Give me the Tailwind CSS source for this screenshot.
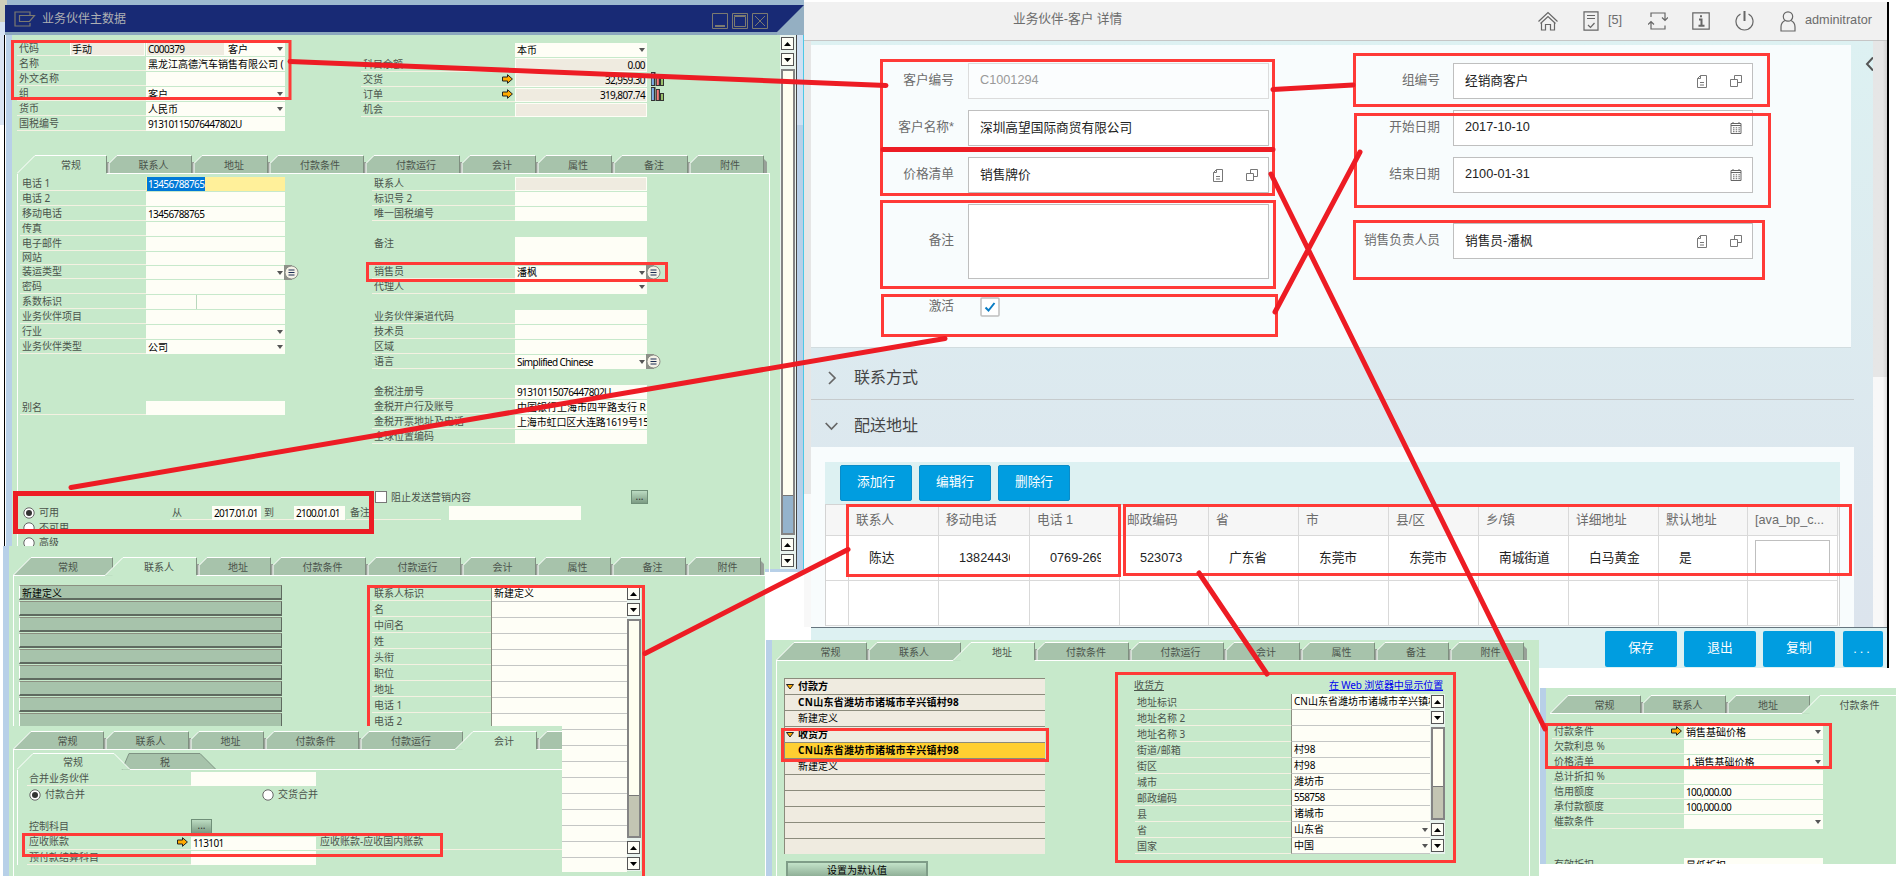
<!DOCTYPE html>
<html lang="zh-CN">
<head>
<meta charset="utf-8">
<title>业务伙伴主数据</title>
<script src="https://cdn.jsdelivr.net/npm/@tailwindcss/browser@4"></script>
</head>
<body class="relative h-[876px] w-[1896px] overflow-hidden bg-white font-['Noto_Sans','Noto_Sans_CJK_SC',sans-serif] text-[10px] leading-[15px] text-[#4b544c]">

<!-- Main data window -->
<section class="absolute left-0 top-0 h-[572px] w-[804px] overflow-hidden bg-[#b8d0e8]">
  <div class="flex h-[5px] bg-[#9db9cf]"><div class="w-[7px] bg-[#cfcfba]"></div></div>
  <div class="flex h-[30px]">
    <div class="w-[5px] bg-[#cfcfba] shrink-0"><div class="mt-[17px] h-[13px] bg-[#d5e2f2]"></div></div>
    <header class="relative flex flex-1 items-center border-b-[3px] border-[#8ba7bd] bg-[#182a75] pl-[9px] text-[#aeb0b3]">
      <svg class="h-[16px] w-[22px]" viewBox="0 0 22 16" fill="none" stroke="#7c7a70" stroke-width="1.2"><path d="M16 4V1H1v14h15v-3"/><path d="M5.500 4.500h15l-5 6h-10z"/></svg>
      <span class="ml-[6px] text-[12px]">业务伙伴主数据</span>
      <div class="ml-auto mr-[36px] mt-[4px] flex gap-[4px]">
        <svg class="size-[16px]" viewBox="0 0 16 16" fill="none" stroke="#7c7a70"><path d="M.5.5h15v15H.5z"/><path stroke-width="2" d="M3 13h10"/></svg>
        <svg class="size-[16px]" viewBox="0 0 16 16" fill="none" stroke="#7c7a70"><path d="M.5.5h15v15H.5zM2.500 3.500h11v10h-11z"/><path d="M2 2.500h12"/></svg>
        <svg class="size-[16px]" viewBox="0 0 16 16" fill="none" stroke="#7c7a70"><path d="M.5.5h15v15H.5zM3 3l10 10M13 3L3 13"/></svg>
      </div>
      <svg class="absolute right-0 top-0 h-[30px] w-[27px]" viewBox="0 0 27 30"><path d="M27 0v30H0v-3z" fill="#94afc2"/></svg>
    </header>
  </div>
  <div class="flex h-[534px]">
    <div class="w-[4px] bg-white"><div class="h-[90px] bg-[#dbe5f3]"></div></div>
    <div class="w-px bg-black"></div><div class="w-px bg-white"></div><div class="w-[6px]"></div>
    <div class="w-[768px] bg-[#c7e9cb]">
      <div class="flex pl-[5px] pt-[6px]">
        <div class="w-[268px]" id="w1a"></div>
        <div class="ml-[76px] mt-px" id="w1b"></div>
      </div>
      <div class="ml-[5px] mt-[24px] w-[753px]">
        <div id="w1tabs"></div>
        <div class="h-[400px] border-x border-white">
          <div class="flex h-[270px] pl-[2px] pt-[2px]">
            <div class="w-[265px]" id="w1c"></div>
            <div class="ml-[87px]" id="w1d"></div>
          </div>
          <div class="flex h-[16px] items-center pl-[357px] mt-[45px]">
            <span class="size-[12px] border border-[#777] bg-white"></span><span class="ml-[4px]">阻止发送营销内容</span>
            <span class="ml-auto mr-[121px] flex h-[14px] w-[17px] justify-center border border-[#6f8f78] bg-linear-to-b from-[#bcdcc2] to-[#7c9c84] leading-[11px] text-[#333]">...</span>
          </div>
          <div class="flex h-[15px] pl-[5px]">
            <span class="w-[147px] flex items-center gap-[4px]"><svg class="size-[12px]" viewBox="0 0 12 12"><circle cx="6" cy="6" r="5.200" fill="#fff" stroke="#666"/><circle cx="6" cy="6" r="3" fill="#333"/></svg>可用</span>
            <span class="w-[42px] border-b border-[#f4f1e2] pl-[2px]">从</span><span class="mt-px w-[49px] bg-[#fefef6] pl-[2px] leading-[14px] tracking-[-.75px] text-black">2017.01.01</span>
            <span class="w-[33px] border-b border-[#f4f1e2] pl-[3px]">到</span><span class="mt-px w-[51px] bg-[#fefef6] pl-[2px] leading-[14px] tracking-[-.75px] text-black">2100.01.01</span>
            <span class="ml-px w-[95px] border-b border-[#f4f1e2] pl-[4px]">备注</span><span class="ml-[8px] mt-px w-[132px] bg-[#fefef6]"></span>
          </div>
          <div class="flex h-[15px] items-center gap-[4px] pl-[5px]"><svg class="size-[12px]" viewBox="0 0 12 12"><circle cx="6" cy="6" r="5.200" fill="#fff" stroke="#666"/></svg>不可用</div>
          <div class="flex h-[15px] items-center gap-[4px] pl-[5px]"><svg class="size-[12px]" viewBox="0 0 12 12"><circle cx="6" cy="6" r="5.200" fill="#fff" stroke="#666"/></svg>高级</div>
        </div>
      </div>
    </div>
    <div class="w-[17px] border-r border-[#444] bg-[#e9f3ee] pl-px pt-[2px]"><div class="h-[530px]" id="sb1"></div></div>
    <div class="w-[6px]"><div class="h-[90px] bg-[#cfe0f3]"></div></div><div class="w-px bg-[#4cc8e6]"></div>
  </div>
</section>

<!-- Contacts tab -->
<section class="absolute left-0 top-[546px] flex h-[330px] w-[765px] bg-white">
  <div class="ml-[3px] w-[6px] bg-[#b8d0e8]"></div>
  <div class="w-[756px] bg-[#c7e9cb] pl-[4px] pt-[11px]">
    <div id="w2tabs"></div>
    <div class="flex h-[300px] border-l border-white pl-[5px] pt-[9px]">
      <div class="w-[263px]" id="w2list"></div>
      <div class="ml-[90px] flex">
        <div class="w-[119px]" id="w2lab"></div>
        <div class="h-[287px] w-[136px] border-l border-t border-[#8b8f80] bg-[#fefef6] text-black" id="w2val"></div>
        <div class="h-[286px] w-[14px] bg-[#e9f3ee] pt-[2px]"><div class="h-[283px]" id="sb2"></div></div>
      </div>
    </div>
  </div>
</section>

<!-- Accounting tab -->
<section class="absolute left-[9px] top-[726px] h-[150px] w-[553px] overflow-hidden bg-[#c7e9cb] pl-[4px] pt-[5px]">
  <div id="w3tabs"></div>
  <div class="h-[140px] border-l border-white pl-[3px] pt-[3px]">
    <div class="relative flex h-[17px]">
      <svg class="absolute left-0 top-0 h-[17px] w-[545px]" viewBox="0 0 545 17" fill="none"><path d="M105 17 112 .5h71l16 16" fill="#a7c3ab" stroke="#7f9383"/><path d="M0 16.500 16 .5h81l16 16z" fill="#c7e9cb"/><path d="M0 16.500 16 .5h81l16 16H545" stroke="#fff"/></svg>
      <span class="relative w-[112px] text-center leading-[19px]">常规</span><span class="relative w-[72px] text-center leading-[19px]">税</span>
    </div>
    <div class="border-l border-white pl-[9px] pt-[1px]">
      <div class="flex h-[15px]"><span class="w-[164px] border-b border-[#f4f1e2] pl-[2px]">合并业务伙伴</span><span class="mt-px w-[125px] bg-[#fefef6]"></span></div>
      <div class="flex h-[17px] items-center pl-[2px]"><svg class="size-[12px]" viewBox="0 0 12 12"><circle cx="6" cy="6" r="5.200" fill="#fff" stroke="#666"/><circle cx="6" cy="6" r="3" fill="#333"/></svg><span class="ml-[4px] w-[217px]">付款合并</span><svg class="size-[12px]" viewBox="0 0 12 12"><circle cx="6" cy="6" r="5.200" fill="#fff" stroke="#666"/></svg><span class="ml-[4px]">交货合并</span></div>
      <div class="mt-[15px] flex h-[16px] items-center"><span class="w-[164px] pl-[2px]">控制科目</span><span class="flex h-[15px] w-[21px] justify-center border border-[#6f8f78] bg-linear-to-b from-[#bcdcc2] to-[#7c9c84] leading-[11px] text-[#333]">...</span></div>
      <div class="flex h-[16px]"><span class="flex w-[164px] items-center justify-between border-b border-[#f4f1e2] pl-[2px] pr-[3px]">应收账款<svg class="h-[10px] w-[11px]" viewBox="0 0 11 10"><path d="M.5 3h5V.7L10.400 5 5.500 9.300V7h-5z" fill="#fa0" stroke="#222"/></svg></span><span class="mt-[3px] w-[125px] bg-[#fefef6] pl-[2px] leading-[13px] tracking-[-.6px] text-black">113101</span><span class="flex-1 border-b border-[#f4f1e2] pl-[4px]">应收账款-应收国内账款</span></div>
      <div class="flex h-[15px]"><span class="w-[164px] border-b border-[#f4f1e2] pl-[2px] leading-[15px]">预付款结算科目</span><span class="mt-px w-[125px] bg-[#fefef6]"></span></div>
    </div>
  </div>
</section>

<!-- Customer detail page -->
<section class="absolute left-[804px] top-[2px] h-[666px] w-[1085px] overflow-hidden border-r-2 border-black bg-white font-['Liberation_Sans','Noto_Sans_CJK_SC',sans-serif] text-[12.7px] text-[#6c6c6c]">
  <header class="flex h-[39px] items-center border-b border-[#c6c6c6] bg-[#f1f1f1]">
    <h1 class="ml-[209px] w-[525px] pb-[4px]">业务伙伴-客户 详情</h1>
    <svg class="h-[20px] w-[20px]" viewBox="0 0 20 20" fill="none" stroke="#666" stroke-width="1.200"><path d="M.5 10.500 10 1.500l9.500 9M2.500 12.500 10 5.500l7.500 7M3.500 12v7h4v-5.500h5V19h4v-7"/></svg>
    <svg class="ml-[25px] h-[20px] w-[16px]" viewBox="0 0 16 20" fill="none" stroke="#666" stroke-width="1.200"><path d="M1 .8h14v18.400H1zM4 4.500h8M4 7.500h8M5 14l2.500 2.500 4-4.500"/></svg>
    <span class="ml-[9px] w-[16px] pb-px">[5]</span>
    <svg class="ml-[24px] h-[20px] w-[20px]" viewBox="0 0 20 20" fill="none" stroke="#666" stroke-width="1.200"><path d="M3 6V2h14v7M14 6.500l3 3 3-3M17 14.500V18H3v-7M0 13.500l3-3 3 3"/></svg>
    <svg class="ml-[24px] h-[18px] w-[18px]" viewBox="0 0 18 18" fill="none" stroke="#666" stroke-width="1.200"><path d="M.8.8h16.400v16.400H.8z"/><path stroke-width="2" d="M7 7.500h2.500v6M6.500 13.700h6M8 4.300h2"/></svg>
    <svg class="ml-[25px] h-[20px] w-[19px]" viewBox="0 0 19 20" fill="none" stroke="#666" stroke-width="1.200"><path d="M5.500 3a8.500 8.500 0 1 0 8 0"/><path stroke-width="2" d="M9.500 0v10"/></svg>
    <svg class="ml-[26px] h-[21px] w-[16px]" viewBox="0 0 16 21" fill="none" stroke="#666" stroke-width="1.200"><circle cx="8" cy="5.500" r="4.700"/><path d="M5 9.500C2 11 1 13 1 16v4h14v-4c0-3-1-5-4-6.500"/></svg>
    <span class="ml-[9px] pb-[2px]">adminitrator</span>
  </header>
  <div class="flex h-[586px]">
    <div class="w-[7px] bg-[#e6e6e6]"><div class="mt-[453px] h-[133px] bg-[#f8f8f8]"></div></div>
    <main class="relative w-[1062px] bg-linear-to-b from-[#ddf1f2] to-[#dce4ed] pt-[4px]">
      <svg class="absolute right-0 top-[16px] h-[14px] w-[8px]" viewBox="0 0 8 14" fill="none" stroke="#555" stroke-width="2"><path d="M8 .5 2 7l6 6.500"/></svg>
      <div class="flex h-[303px] w-[1040px] border-b border-[#d2dcdf] bg-[#f8fcfd] pt-[18px]">
        <div class="flex w-[458px] flex-col gap-[11px]">
          <div class="flex h-[36px]"><label class="w-[143px] text-right leading-[34px]">客户编号</label><span class="ml-[14px] w-[301px] border border-[#dcdcdc] bg-[#fbfdfe] pl-[11px] leading-[33px] text-[#999]">C1001294</span></div>
          <div class="flex h-[36px]"><label class="w-[143px] text-right leading-[34px]">客户名称*</label><span class="ml-[14px] w-[301px] border border-[#bfbfbf] bg-white pl-[11px] leading-[34px] text-[#222]">深圳高望国际商贸有限公司</span></div>
          <div class="flex h-[36px]"><label class="w-[143px] text-right leading-[34px]">价格清单</label><span class="ml-[14px] flex w-[301px] items-center border border-[#bfbfbf] bg-white pl-[11px] pr-[10px] text-[#222]">销售牌价<svg class="ml-auto h-[13px] w-[10px]" viewBox="0 0 10 13" fill="none" stroke="#777"><path d="M3.500.5h6v12h-9v-9zM3.500.5v3h-3M3 7.500h4M3 10h4"/></svg><svg class="ml-[23px] h-[12px] w-[12px]" viewBox="0 0 12 12" fill="none" stroke="#777"><path d="M.5 4.500h7v7h-7zM4.500 4.500v-4h7v7h-4"/></svg></span></div>
          <div class="flex h-[75px]"><label class="w-[143px] text-right leading-[72px]">备注</label><span class="ml-[14px] w-[301px] border border-[#bfbfbf] bg-white"></span></div>
          <div class="flex h-[36px] items-center"><label class="w-[143px] pb-[3px] text-right">激活</label><svg class="mb-[2px] ml-[26px] size-[20px]" viewBox="0 0 20 20" fill="none"><rect x="1" y="1" width="18" height="18" rx="1" fill="#fff" stroke="#bfbfbf" stroke-width="1.500"/><path d="m5.500 10.500 3 3L14.500 6" stroke="#0a7cc4" stroke-width="2"/></svg></div>
        </div>
        <div class="flex flex-col gap-[11px]">
          <div class="flex h-[36px]"><label class="w-[171px] text-right leading-[34px]">组编号</label><span class="ml-[13px] flex w-[300px] items-center border border-[#bfbfbf] bg-white pl-[11px] pr-[10px] text-[#222]">经销商客户<svg class="ml-auto h-[13px] w-[10px]" viewBox="0 0 10 13" fill="none" stroke="#777"><path d="M3.500.5h6v12h-9v-9zM3.500.5v3h-3M3 7.500h4M3 10h4"/></svg><svg class="ml-[23px] h-[12px] w-[12px]" viewBox="0 0 12 12" fill="none" stroke="#777"><path d="M.5 4.500h7v7h-7zM4.500 4.500v-4h7v7h-4"/></svg></span></div>
          <div class="flex h-[36px]"><label class="w-[171px] text-right leading-[34px]">开始日期</label><span class="ml-[13px] flex w-[300px] items-center border border-[#bfbfbf] bg-white pl-[11px] pr-[10px] text-[#222]"><span class="pb-[2px]">2017-10-10</span><svg class="ml-auto h-[12px] w-[12px]" viewBox="0 0 12 12" fill="none" stroke="#666"><path d="M1 1.500h10v10H1zM1 3.500h10M3 0v2M9 0v2"/><path stroke-dasharray="1.500 1.200" d="M3 5.800h7M3 7.800h7M3 9.700h7"/></svg></span></div>
          <div class="flex h-[36px]"><label class="w-[171px] text-right leading-[34px]">结束日期</label><span class="ml-[13px] flex w-[300px] items-center border border-[#bfbfbf] bg-white pl-[11px] pr-[10px] text-[#222]"><span class="pb-[2px]">2100-01-31</span><svg class="ml-auto h-[12px] w-[12px]" viewBox="0 0 12 12" fill="none" stroke="#666"><path d="M1 1.500h10v10H1zM1 3.500h10M3 0v2M9 0v2"/><path stroke-dasharray="1.500 1.200" d="M3 5.800h7M3 7.800h7M3 9.700h7"/></svg></span></div>
          <div class="mt-[19px] flex h-[36px]"><label class="w-[171px] text-right leading-[34px]">销售负责人员</label><span class="ml-[13px] flex w-[300px] items-center border border-[#bfbfbf] bg-white pl-[11px] pr-[10px] text-[#222]">销售员-潘枫<svg class="ml-auto h-[13px] w-[10px]" viewBox="0 0 10 13" fill="none" stroke="#777"><path d="M3.500.5h6v12h-9v-9zM3.500.5v3h-3M3 7.500h4M3 10h4"/></svg><svg class="ml-[23px] h-[12px] w-[12px]" viewBox="0 0 12 12" fill="none" stroke="#777"><path d="M.5 4.500h7v7h-7zM4.500 4.500v-4h7v7h-4"/></svg></span></div>
        </div>
      </div>
      <h2 class="flex h-[52px] w-[1043px] items-center border-b border-[#c6cbcd] pl-[14px] text-[16px] text-[#444]"><svg class="mr-[17px] mt-[9px] h-[14px] w-[12px]" viewBox="0 0 12 14" fill="none" stroke="#666" stroke-width="1.700"><path d="m4 1 6 6-6 6"/></svg><span class="pt-[8px]">联系方式</span></h2>
      <h2 class="flex h-[47px] w-[1043px] items-center pl-[14px] text-[16px] text-[#444]"><svg class="mr-[16px] mt-[4px] h-[14px] w-[13px]" viewBox="0 0 13 14" fill="none" stroke="#666" stroke-width="1.700"><path d="m.7 4 5.800 6 5.800-6"/></svg><span class="pt-[4px]">配送地址</span></h2>
      <div class="h-[180px] w-[1043px] bg-[#f8fcfd] pl-[14px] pt-[15px]">
        <div class="flex h-[42px] w-[1015px] gap-[7px] bg-[#ddf1f2] pl-[15px] pt-[3px] text-center leading-[32px] text-white">
          <button class="h-[36px] w-[72px] rounded-[2px] border border-[#0a8cc8] bg-[#009de0] pb-[2px]">添加行</button>
          <button class="h-[36px] w-[72px] rounded-[2px] border border-[#0a8cc8] bg-[#009de0] pb-[2px]">编辑行</button>
          <button class="h-[36px] w-[72px] rounded-[2px] border border-[#0a8cc8] bg-[#009de0] pb-[2px]">删除行</button>
        </div>
        <div class="w-[1015px] border-l border-r border-t border-[#d3d3d3] bg-white" id="grid"></div>
      </div>
    </main>
    <div class="w-[14px] bg-linear-to-r from-[#e6e6e6] from-70% to-[#d2d2d2]"><div class="mt-[336px] h-[250px] bg-linear-to-r from-[#f8f8f8] from-70% to-[#e0e0e0]"></div></div>
  </div>
  <footer class="relative ml-[7px] flex h-[41px] gap-[7px] border-t border-[#66757f] bg-[#ddf1f2] pl-[794px] pt-[3px] text-center leading-[34px] text-white">
    <button class="h-[36px] w-[72px] rounded-[2px] bg-[#009de0] pb-[2px]">保存</button><button class="h-[36px] w-[72px] rounded-[2px] bg-[#009de0] pb-[2px]">退出</button><button class="h-[36px] w-[72px] rounded-[2px] bg-[#009de0] pb-[2px]">复制</button><button class="ml-px h-[36px] w-[40px] rounded-[2px] bg-[#009de0] tracking-[3px]">...</button>
  </footer>
</section>

<!-- Address tab -->
<section class="absolute left-[766px] top-[640px] flex h-[236px] w-[773px] overflow-hidden bg-[#c7e9cb]">
  <div class="w-[6px] bg-[#b8d0e8]"></div>
  <div class="ml-[4px] mt-[2px] w-[754px]">
    <div id="w4tabs"></div>
    <div class="flex h-[220px] border-x border-white pl-[7px] pt-[10px]">
      <div class="mt-[7px] w-[261px] text-[10px] text-black">
        <div class="h-[176px] border-l border-[#8b8b7c] bg-[#efebe0]" id="w4list"></div>
        <button class="ml-[2px] mt-[7px] h-[18px] w-[142px] border-2 border-[#7f9d88] bg-linear-to-b from-[#c3e3c9] to-[#8cac94] leading-[14px]">设置为默认值</button>
      </div>
      <div class="ml-[89px]">
        <div class="flex h-[23px] w-[309px] items-center justify-between pt-[5px]"><span class="underline">收货方</span><a class="text-[#0000f0] underline tracking-[-.15px]">在 Web 浏览器中显示位置</a></div>
        <div class="ml-px flex"><div id="w4form"></div><div class="h-[160px] w-[15px] bg-[#e9f3ee] pl-px pt-px"><div class="h-[157px]" id="sb4"></div></div></div>
      </div>
    </div>
  </div>
</section>

<!-- Payment terms tab -->
<section class="absolute left-[1540px] top-[688px] flex h-[176px] w-[356px] overflow-hidden bg-[#c7e9cb]">
  <div class="w-[6px] shrink-0 bg-[#b8d0e8]"></div>
  <div class="ml-[4px] mt-[7px] w-[346px]">
    <div id="w5tabs"></div>
    <div class="pl-[2px] pt-[10px]" id="w5form"></div>
  </div>
</section>

<!-- Annotations -->
<svg class="pointer-events-none absolute left-0 top-0 h-[876px] w-[1896px]" viewBox="0 0 1896 876" fill="none">
  <g stroke="#ff3a37" stroke-width="3">
    <path d="M12.500 41.500h277.500V98.500H12.500zM367.500 263.500h299v17h-299zM368.500 726V586.500H643.500V876M23.500 834.500h418v21h-418z"/>
    <path d="M881.500 60.500H1273.500V194.500H881.500zM881.500 201.500H1274.500V287.500H881.500zM882.500 295.500H1276.500V335.500H882.500zM1354.500 54.500H1768.500V105.500H1354.500zM1355.500 114.500H1769.500V206.500H1355.500zM1354.500 221.500H1763.500V278.500H1354.500z"/>
    <path d="M847.500 505.500H1119.500V575.500H847.500zM1124.500 505.500H1850.500V574.500H1124.500zM782.500 729.500H1047.500V760.500H782.500zM1116.500 673.500H1454.500V861.500H1116.500zM1546.500 724.500H1830.500V767.500H1546.500z"/>
  </g>
  <g stroke="#ed1c24" stroke-width="5" stroke-linecap="round">
    <path stroke-linecap="butt" d="M15.500 493.500H371.500V531.500H15.500z"/>
    <path d="M290 61.500 886 85.500M1273 89.500 1353 85M1271 174 1545 729M1275 312 1360 152M945 338.500 71 487.500M848 549.500 645 653.500M1199 573 1267 674M883 149.500H1273"/>
  </g>
</svg>

<script>
const $ = id => document.getElementById(id);
const DOWN = '<svg class="ml-auto mr-[2px] h-[4px] w-[6px] shrink-0" viewBox="0 0 6 4"><path d="M0 0h6L3 4z" fill="#555"/></svg>';
const MENU = '<svg class="-ml-px h-[15px] w-[15px] shrink-0" viewBox="0 0 15 15"><path d="M0 0h8v15H0z" fill="#8d9088"/><circle cx="7.500" cy="7.500" r="6.500" fill="#f4f1e6" stroke="#8d9088"/><path d="M4.500 5h6M4.500 7.500h6M4.500 10h6" stroke="#1b2d55"/></svg>';
const GO = '<svg class="ml-auto mr-[2px] h-[10px] w-[11px] shrink-0" viewBox="0 0 11 10"><path d="M.5 3h5V.7L10.400 5 5.500 9.300V7h-5z" fill="#fa0" stroke="#222"/></svg>';
const BARS = '<svg class="ml-[4px] h-[14px] w-[13px] shrink-0" viewBox="0 0 13 14"><path d="M0 0h4.500v14H0zM5 2h4v12H5zM9 6h4v8H9z" fill="#333"/><path d="M1.800 1v12" stroke="#7fb0e8" stroke-width="2.200"/><path d="M6.800 3V13" stroke="#f57a7a" stroke-width="2"/><path d="M11 7V13" stroke="#a5d070" stroke-width="1.800"/></svg>';

// Form row. Flags: a = dropdown, b = read-only, r = right aligned, m = menu, o = link arrow, g = chart, t = selected, s = split, x = no underline
function row(lw, fw, label, value = '', f = '', h = 15) {
  const has = c => f.includes(c);
  const latin = /^[\x00-\x7f]*$/.test(value);
  let v = `<span class="${latin ? 'tracking-[-.6px]' : 'tracking-normal'} ${has('t') ? 'bg-[#0078d7] text-white px-px -ml-px' : 'text-black'} ${has('r') ? 'ml-auto pr-px' : ''}">${value}</span>`;
  if (has('s')) v = '<span class="ml-[48px] h-full w-px bg-[#b9d8bd]"></span>';
  return `<div class="flex" style="height:${h}px"><div class="flex shrink-0 whitespace-nowrap pl-[2px] ${has('x') ? 'items-start' : 'items-center border-b border-[#f4f1e2]'}" style="width:${lw}px">${label}${has('o') ? GO : ''}</div>`
    + `<div class="mt-px flex shrink-0 items-center overflow-hidden whitespace-nowrap pl-[2px] ${has('b') ? 'bg-[#efebe0] border border-[#fefef6]' : has('t') ? 'bg-[#fff09a]' : 'bg-[#fefef6]'}" style="width:${fw}px">${v}${has('a') ? DOWN : ''}</div>${has('m') ? MENU : ''}${has('g') ? BARS : ''}</div>`;
}
const rows = (lw, fw, list) => list.map(r => typeof r === 'number' ? `<div style="height:${r}px"></div>` : row(lw, fw, ...r)).join('');

// Tab strip with slanted left corners
function tabs(items, active, total, last = true) {
  let x = 0, back = '', front = '', labels = '', gap = [0, 0];
  items.forEach(([t, w], i) => {
    const e = x + w, on = i === active, fill = on ? '#c7e9cb' : '#a7c3ab';
    const start = i === 0 ? `M0 18.500 18 .5` : on ? `M${x - 8} 18.500 ${x + 10} .5` : `M${x + 2} 18.500V8.500L${x + 10} .5`;
    let s = `<path d="${start}H${e - .5}V18.500z" fill="${fill}"/><path d="${start}H${e - 1}" stroke="#fff" fill="none"/><path d="M${e - .5} 1V18" stroke="#7f8f80"/>`;
    if (i && !on) s = `<path d="M${x} 7h2v11h-2z" fill="#98a098"/>` + s;
    if (on) { front = s; gap = [i ? x - 8 : 0, e]; } else back += s;
    labels += `<span class="relative shrink-0 text-center leading-[20px] ${i ? 'pl-[8px]' : 'pl-[18px]'} ${i === active - 1 ? 'pr-[8px]' : ''}" style="width:${w}px">${t}</span>`;
    x = e;
  });
  if (last) back += `<path d="M${x} 4l3 3v11h-3z" fill="#98a098"/>`;
  return `<div class="relative flex h-[19px] overflow-hidden whitespace-nowrap" style="width:${total}px"><svg class="absolute left-0 top-0 h-[19px]" style="width:${total}px" viewBox="0 0 ${total} 19">${back}<path d="M0 18.500H${gap[0]}M${gap[1]} 18.500H${total}" stroke="#fff"/>${front}</svg>${labels}</div>`;
}

const btn = d => `<div class="flex h-[13px] w-[13px] shrink-0 items-center justify-center border border-[#555] bg-[#fefef6]"><svg class="h-[4px] w-[7px]" viewBox="0 0 7 4"><path d="${d}" fill="#000"/></svg></div>`;
const up = btn('M0 4h7L3.500 0z'), dn = btn('M0 0h7L3.500 4z');
const bar = (thumb, colour) => `<div class="flex h-full flex-col gap-[3px]">${up}${dn}<div class="flex w-[14px] flex-1 flex-col border-2 border-[#848484] bg-[#fefef0]"><div class="mt-auto border-t border-[#777] ${colour}" style="height:${thumb}px"></div></div>${up}${dn}</div>`;

$('w1a').innerHTML = `<div class="flex h-[15px] text-black"><div class="w-[53px] border-b border-[#f4f1e2] pl-[2px] text-[#4b544c]">代码</div><div class="mt-px w-[75px] border border-[#fefef6] bg-[#efebe0] pl-px leading-[13px]">手动</div><div class="ml-px mt-px w-[79px] border border-[#fefef6] bg-[#efebe0] pl-px leading-[13px] tracking-[-.6px]">C000379</div><div class="mt-px flex w-[60px] items-center bg-[#fefef6] pl-[3px]">客户${DOWN}</div></div>`
  + rows(129, 139, [['名称', '黑龙江高德汽车销售有限公司 ('], ['外文名称'], ['组', '客户', 'a'], ['货币', '人民币', 'a'], ['国税编号', '91310115076447802U']]);
$('w1b').innerHTML = rows(154, 132, [['', '本币', 'ax'], ['科目余额', '0.00', 'br'], ['交货', '32,959.30', 'brog'], ['订单', '319,807.74', 'brog'], ['机会', '', 'b']]);
$('w1tabs').innerHTML = tabs([['常规', 90], ['联系人', 85], ['地址', 76], ['付款条件', 96], ['付款运行', 96], ['会计', 76], ['属性', 76], ['备注', 76], ['附件', 76]], 0, 753);
$('w1c').innerHTML = rows(126, 139, [['电话 1', '13456788765', 't'], ['电话 2'], ['移动电话', '13456788765'], ['传真'], ['电子邮件'], ['网站', '', '', 14], ['装运类型', '', 'am', 14], ['密码'], ['系数标识', '', 's'], ['业务伙伴项目'], ['行业', '', 'a'], ['业务伙伴类型', '公司', 'a'], 46, ['别名']]);
$('w1d').innerHTML = rows(143, 132, [['联系人', '', 'b'], ['标识号 2'], ['唯一国税编号'], 15, ['备注', '', 'x', 29], ['销售员', '潘枫', 'am', 14], ['代理人', '', 'a'], 15, ['业务伙伴渠道代码'], ['技术员'], ['区域'], ['语言', 'Simplified Chinese', 'am'], 15, ['金税注册号', '91310115076447802U'], ['金税开户行及账号', '中国银行上海市四平路支行 R'], ['金税开票地址及电话', '<span class="tracking-[-.15px]">上海市虹口区大连路1619号15</span>'], ['全球位置编码']]);
$('sb1').innerHTML = bar(38, 'bg-[#94b3cc]');

$('w2tabs').innerHTML = tabs([['常规', 100], ['联系人', 84], ['地址', 74], ['付款条件', 95], ['付款运行', 95], ['会计', 75], ['属性', 75], ['备注', 75], ['附件', 75]], 1, 752);
$('w2list').innerHTML = Array.from({ length: 9 }, (_, i) => `<div class="mb-px h-[15px] border border-b-2 border-[#5f6b60] border-l-white border-t-[#8b8f80] bg-[#a7c3ab] pl-[2px] leading-[14px] text-black">${i ? '' : '新建定义'}</div>`).join('');
$('w2lab').innerHTML = ['联系人标识', '名', '中间名', '姓', '头衔', '职位', '地址', '电话 1', '电话 2'].map(t => `<div class="h-[16px] border-b border-[#f4f1e2] pl-[2px] leading-[17px]">${t}</div>`).join('');
$('w2val').innerHTML = Array.from({ length: 17 }, (_, i) => `<div class="h-[16px] border-b border-[#c4c6c4] pl-[2px] leading-[14px]">${i ? '' : '新建定义'}</div>`).join('');
$('sb2').innerHTML = bar(41, 'bg-[#c3c5b3]');

$('w3tabs').innerHTML = tabs([['常规', 91], ['联系人', 85], ['地址', 75], ['付款条件', 95], ['付款运行', 104], ['会计', 74], ['', 40]], 5, 549, false);

const cols = [['', '', 23], ['联系人', '陈达', 90], ['移动电话', '13824430', 91], ['电话 1', '0769-2695', 90], ['邮政编码', '523073', 89], ['省', '广东省', 90], ['市', '东莞市', 90], ['县/区', '东莞市', 90], ['乡/镇', '南城街道', 90], ['详细地址', '白马黄金', 90], ['默认地址', '是', 89], ['[ava_bp_c...', null, 90]];
const line = (cls, fn) => `<div class="flex ${cls}">${cols.map(c => `<div class="shrink-0 border-b border-r border-[#d9d9d9]" style="width:${c[2]}px">${fn(c)}</div>`).join('')}</div>`;
$('grid').innerHTML = line('h-[31px] bg-[#f6f6f6] leading-[30px]', c => `<div class="overflow-hidden whitespace-nowrap pl-[7px]">${c[0]}</div>`)
  + line('h-[45px] leading-[44px] text-[#222]', c => c[1] === null ? '<div class="ml-[7px] mt-[4px] h-[36px] w-[75px] border border-[#bfbfbf]"></div>' : `<div class="ml-[20px] w-[51px] overflow-hidden whitespace-nowrap">${c[1]}</div>`)
  + line('h-[45px]', () => '');

$('w4tabs').innerHTML = tabs([['常规', 91], ['联系人', 94], ['地址', 74], ['付款条件', 94], ['付款运行', 95], ['会计', 76], ['属性', 75], ['备注', 74], ['附件', 75]], 2, 754);
$('w4list').innerHTML = [['付款方', 1], ['CN山东省潍坊市诸城市辛兴镇村98', 2], ['新建定义', 0], ['收货方', 1], ['CN山东省潍坊市诸城市辛兴镇村98', 3], ['新建定义', 0], ['', 0], ['', 0], ['', 0], ['', 0], ['', 0]].map(([t, k]) =>
  `<div class="flex h-[16px] items-center border-t border-[#8b8b7c] pl-px ${k ? 'font-bold' : ''} ${k > 1 ? 'tracking-[.3px]' : ''} ${k === 3 ? 'bg-[#ffcf31]' : ''}">${k === 1 ? '<svg class="h-[6px] w-[8px]" viewBox="0 0 8 6"><path d="M.5.5h7L4 5z" fill="#fa0" stroke="#222"/></svg>' : '<span class="w-[8px]"></span>'}<span class="ml-[4px]">${t}</span></div>`).join('');
$('w4form').innerHTML = [['地址标识', 'CN山东省潍坊市诸城市辛兴镇村98'], ['地址名称 2', ''], ['地址名称 3', ''], ['街道/邮箱', '村98'], ['街区', '村98'], ['城市', '潍坊市'], ['邮政编码', '558758'], ['县', '诸城市'], ['省', '山东省', 1], ['国家', '中国', 1]].map(([l, v, d]) =>
  `<div class="flex h-[16px]"><div class="w-[156px] border-b border-[#f4f1e2] pl-[2px] leading-[16px]">${l}</div><div class="flex w-[139px] items-center overflow-hidden whitespace-nowrap border-b border-l border-b-[#c4c6c4] border-l-[#8b8f80] bg-[#fefef6] pl-[2px] text-black ${v === '558758' ? 'tracking-[-.6px]' : ''}">${v}${d ? DOWN : ''}</div></div>`).join('');
$('sb4').innerHTML = bar(32, 'bg-[#c3c5b3]');

$('w5tabs').innerHTML = tabs([['常规', 91], ['联系人', 85], ['地址', 84], ['付款条件', 91]], 3, 352, false);
$('w5form').innerHTML = rows(132, 139, [['付款条件', '销售基础价格', 'ao'], ['欠款利息 %'], ['价格清单', '1.销售基础价格', 'a'], ['总计折扣 %'], ['信用额度', '100,000.00'], ['承付款额度', '100,000.00'], ['催款条件', '', 'a'], 28, ['有效折扣', '最低折扣']]);
</script>
</body>
</html>
